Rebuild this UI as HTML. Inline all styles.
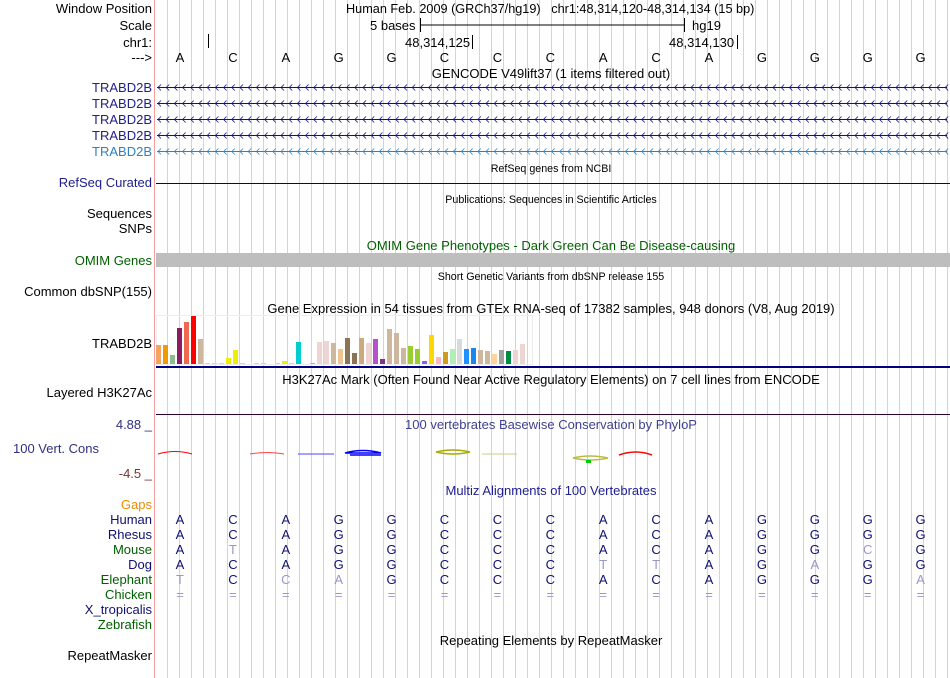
<!DOCTYPE html>
<html><head><meta charset="utf-8"><style>
html,body{margin:0;padding:0;background:#fff;width:950px;height:678px;overflow:hidden}
svg{display:block}
text{font-family:"Liberation Sans",sans-serif;font-size:13px}
.l{text-anchor:end}
.c{text-anchor:middle}
.s{font-size:10.7px}
</style></head><body>
<svg width="950" height="678" viewBox="0 0 950 678" xmlns="http://www.w3.org/2000/svg">
<g id="grid" stroke="#d0d0f6" stroke-width="1"></g>
<line x1="154.5" y1="0" x2="154.5" y2="678" stroke="#f4a0a0"/>
<g fill="#000">
<text x="152" y="13" class="l">Window Position</text>
<text x="152" y="30" class="l">Scale</text>
<text x="152" y="47" class="l">chr1:</text>
<text x="152" y="62" class="l">---&gt;</text>
<text x="346" y="13" style="font-size:12.7px">Human Feb. 2009 (GRCh37/hg19)&#160;&#160;&#160;chr1:48,314,120-48,314,134 (15 bp)</text>
<text x="370" y="30">5 bases</text>
<text x="692" y="30">hg19</text>
<text x="405" y="47">48,314,125</text>
<text x="669" y="47">48,314,130</text>
</g>
<g stroke="#000">
<line x1="421" y1="25" x2="684" y2="25"/>
<line x1="420.5" y1="18" x2="420.5" y2="32"/>
<line x1="684.5" y1="18" x2="684.5" y2="32"/>
<line x1="208.5" y1="34" x2="208.5" y2="48"/>
<line x1="472.5" y1="35" x2="472.5" y2="49"/>
<line x1="737.5" y1="35" x2="737.5" y2="49"/>
</g>
<g class="c" id="bases"></g>
<text x="551" y="78" class="c">GENCODE V49lift37 (1 items filtered out)</text>
<g fill="#20208c">
<text x="152" y="92" class="l">TRABD2B</text>
<text x="152" y="108" class="l">TRABD2B</text>
<text x="152" y="124" class="l">TRABD2B</text>
<text x="152" y="140" class="l">TRABD2B</text>
</g>
<text x="152" y="156" class="l" fill="#3080c0">TRABD2B</text>
<g id="genes"></g>
<text x="551" y="172" class="c s">RefSeq genes from NCBI</text>
<text x="152" y="187" class="l" fill="#20208c">RefSeq Curated</text>
<line x1="156" y1="183.5" x2="950" y2="183.5" stroke="#000080"/>
<text x="551" y="203" class="c s">Publications: Sequences in Scientific Articles</text>
<text x="152" y="218" class="l">Sequences</text>
<text x="152" y="233" class="l">SNPs</text>
<text x="551" y="250" class="c" fill="#006000">OMIM Gene Phenotypes - Dark Green Can Be Disease-causing</text>
<text x="152" y="265" class="l" fill="#006000">OMIM Genes</text>
<rect x="156" y="253" width="794" height="14" fill="#bebebe"/>
<text x="551" y="280" class="c s">Short Genetic Variants from dbSNP release 155</text>
<text x="152" y="296" class="l">Common dbSNP(155)</text>
<text x="551" y="313" class="c">Gene Expression in 54 tissues from GTEx RNA-seq of 17382 samples, 948 donors (V8, Aug 2019)</text>
<text x="152" y="348" class="l">TRABD2B</text>
<rect x="156.5" y="315.5" width="376" height="49" fill="none" stroke="#ededed"/>
<g id="bars"></g>
<rect x="156" y="366" width="794" height="2" fill="#000080"/>
<text x="551" y="384" class="c">H3K27Ac Mark (Often Found Near Active Regulatory Elements) on 7 cell lines from ENCODE</text>
<text x="152" y="397" class="l">Layered H3K27Ac</text>
<line x1="156" y1="414.5" x2="950" y2="414.5" stroke="#300030"/>
<text x="152" y="429" class="l" fill="#303080">4.88 _</text>
<text x="551" y="429" class="c" fill="#404090">100 vertebrates Basewise Conservation by PhyloP</text>
<text x="13" y="453" fill="#303080">100 Vert. Cons</text>
<text x="152" y="478" class="l" fill="#803030">-4.5 _</text>
<g fill="none" stroke-width="1">
<path d="M158 454 Q175 449 192 454" stroke="#f00"/>
<path d="M250 454 Q267 451 284 454" stroke="#f44"/>
<path d="M298 454 L334 454" stroke="#44f"/>
<path d="M345 453 Q363 448 381 453 L345 453 M350 455 L381 455" stroke="#00f" stroke-width="1.5"/>
<path d="M436 452 Q453 448 470 452 Q453 456 436 452" stroke="#aa0" stroke-width="1.5"/>
<path d="M482 454 L517 454" stroke="#cc8"/>
<path d="M573 458 Q590 454 608 458 Q590 462 573 458" stroke="#bb4" stroke-width="1.5"/>
<path d="M619 455 Q636 449 652 455" stroke="#f00" stroke-width="1.5"/>
</g>
<rect x="586" y="460" width="5" height="3" fill="#0c0"/>
<text x="551" y="495" class="c" fill="#202090">Multiz Alignments of 100 Vertebrates</text>
<text x="152" y="509" class="l" fill="#f08c00">Gaps</text>
<text x="152" y="524" class="l" fill="#101070">Human</text>
<text x="152" y="539" class="l" fill="#101070">Rhesus</text>
<text x="152" y="554" class="l" fill="#006000">Mouse</text>
<text x="152" y="569" class="l" fill="#101070">Dog</text>
<text x="152" y="584" class="l" fill="#006000">Elephant</text>
<text x="152" y="599" class="l" fill="#006000">Chicken</text>
<text x="152" y="614" class="l" fill="#101070">X_tropicalis</text>
<text x="152" y="629" class="l" fill="#006000">Zebrafish</text>
<g id="maf" class="c"></g>
<text x="551" y="645" class="c">Repeating Elements by RepeatMasker</text>
<text x="152" y="660" class="l">RepeatMasker</text>
</svg>
<script>
var NS="http://www.w3.org/2000/svg";
function el(p,t,a,txt){var e=document.createElementNS(NS,t);for(var k in a)e.setAttribute(k,a[k]);if(txt!=null)e.textContent=txt;document.getElementById(p).appendChild(e);return e;}
for(var x=167.5;x<950;x+=12)el("grid","line",{x1:x,y1:0,x2:x,y2:678});
var cx=[];for(var i=0;i<15;i++)cx.push(180+i*52.9);
var seq="ACAGGCCCACAGGGG";
for(var i=0;i<15;i++)el("bases","text",{x:cx[i],y:62,"text-anchor":"middle"},seq[i]);
var gy=[87,103,119,135,151];
for(var r=0;r<5;r++){var c=r==4?"#3080c0":"#101080";var y=gy[r]+0.5;
el("genes","line",{x1:157,y1:y,x2:947,y2:y,stroke:c});
var d="";for(var x=158;x<946;x+=8.2){d+="M"+(x+3)+" "+(y-3)+"L"+x+" "+y+"L"+(x+3)+" "+(y+3);}
el("genes","path",{d:d,stroke:c,fill:"none","stroke-width":"0.8"});}
var bars=[[345,"#f4a460"],[345,"#ee9a00"],[355,"#8fbc8f"],[328,"#8b1c62"],[322,"#ee6a50"],[316,"#ff0000"],[339,"#cdb79e"],[363,"#eeee00"],[363,"#eeee00"],[363,"#eeee00"],[358,"#eeee00"],[350,"#eeee00"],[363,"#eeee00"],[364,"#fff"],[363,"#eeee00"],[363,"#eeee00"],[364,"#fff"],[363,"#eeee00"],[361,"#eeee00"],[363,"#eeee00"],[342,"#00cdcd"],[364,"#fff"],[363,"#9ac0cd"],[342,"#eed5d2"],[341,"#eed5d2"],[343,"#cdb79e"],[349,"#eec591"],[338,"#8b7355"],[353,"#8b7355"],[338,"#cdaa7d"],[343,"#eed5d2"],[339,"#b452cd"],[359,"#7a378b"],[329,"#cdb79e"],[333,"#cdb79e"],[348,"#cdb79e"],[346,"#9acd32"],[349,"#9acd32"],[361,"#7b68ee"],[335,"#ffd700"],[357,"#ffb6c1"],[352,"#cd9b1d"],[349,"#b4eeb4"],[339,"#d9d9d9"],[349,"#1e90ff"],[348,"#1c86ee"],[350,"#cdb79e"],[351,"#cdb79e"],[354,"#ffd39b"],[350,"#a0a0a0"],[351,"#008b45"],[350,"#eed5d2"],[344,"#eed5d2"]];
for(var i=0;i<bars.length;i++){if(bars[i][1]=="#fff")continue;el("bars","rect",{x:156+i*7,y:bars[i][0],width:5,height:364-bars[i][0],fill:bars[i][1]});}
var maf=[["AAAAAAAAAAAAAAA"],
["ACAGGCCCACAGGGG",""],
["ACAGGCCCACAGGGG",""],
["ATAGGCCCACAGGCG","1,13"],
["ACAGGCCCTTAGAGG","8,9,12"],
["TCCAGCCCACAGGGA","0,2,3,14"],
["===============","all"]];
var rowsY=[524,539,554,569,584,599];
for(var r=1;r<maf.length;r++){var s=maf[r][0],lt=maf[r][1]||"";var L=lt=="all"?null:lt.split(",");
for(var i=0;i<15;i++){var light=lt=="all"||(L&&L.indexOf(String(i))>=0);
el("maf","text",{x:cx[i],y:rowsY[r-1],"text-anchor":"middle",fill:light?"#9898c8":"#101070"},s[i]);}}
</script>
</body></html>
